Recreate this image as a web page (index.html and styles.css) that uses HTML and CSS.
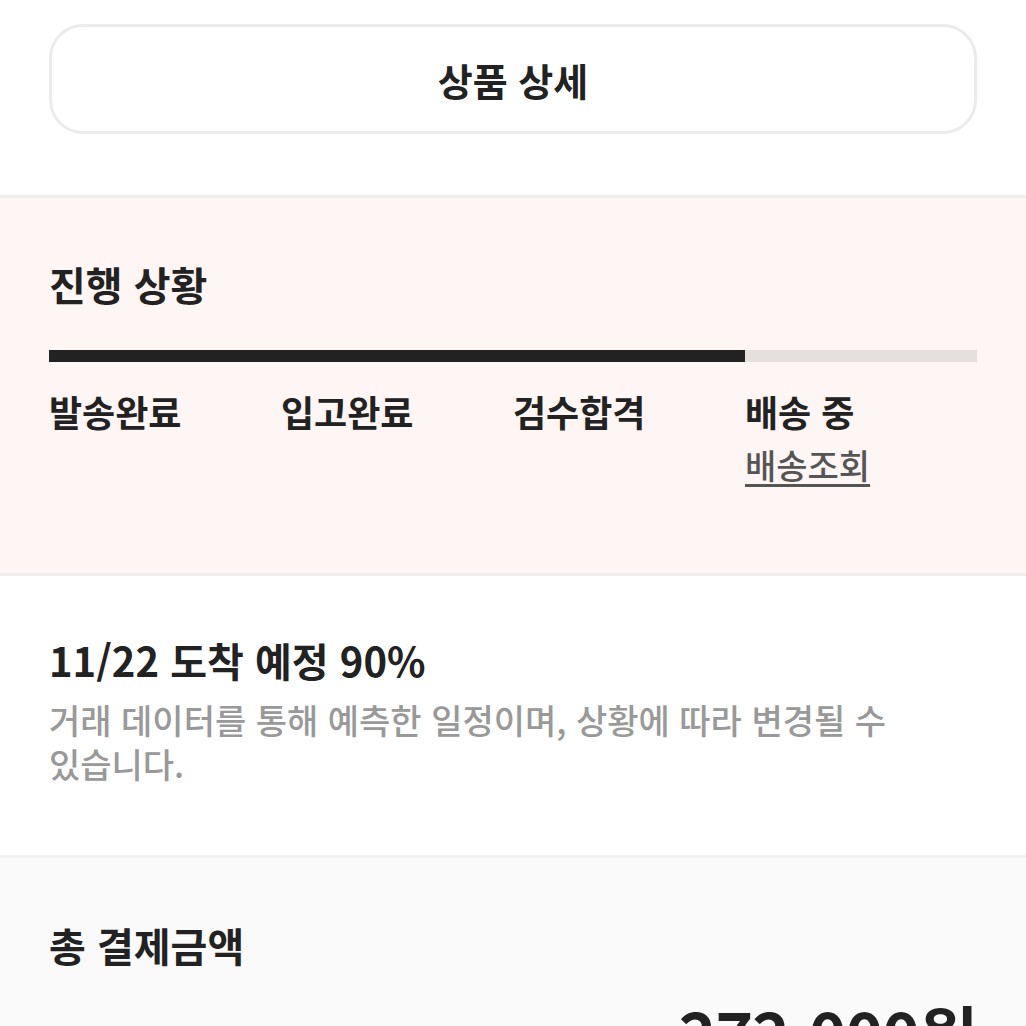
FILE: index.html
```html
<!DOCTYPE html>
<html lang="ko">
<head>
  <meta charset="utf-8">
  <link rel="stylesheet" href="styles.css">
</head>
<body>
  <section class="top">
    <button class="detail-btn">상품 상세</button>
  </section>

  <section class="status">
    <h2 class="title">진행 상황</h2>
    <div class="track"><div class="fill" style="width: 75%"></div></div>
    <ol class="steps">
      <li>발송완료</li>
      <li>입고완료</li>
      <li>검수합격</li>
      <li>배송 중<a href="#" class="track-link">배송조회</a></li>
    </ol>
  </section>

  <section class="eta">
    <h2 class="title">11/22 도착 예정 90%</h2>
    <p class="note">거래 데이터를 통해 예측한 일정이며, 상황에 따라 변경될 수 있습니다.</p>
  </section>

  <section class="total">
    <h2 class="title">총 결제금액</h2>
    <div class="amount">272,000원</div>
  </section>
</body>
</html>
```

FILE: styles.css
```css
body {
  font-family: "Noto Sans CJK KR", "Noto Sans", sans-serif;
  margin: 0;
  background: #fff;
  color: #222;
}

section {
  padding: 0 49px;
}

.top {
  padding-top: 24px;
  padding-bottom: 61px;
  border-bottom: 3px solid #f1eded;
}

.detail-btn {
  display: block;
  width: 100%;
  height: 110px;
  background: #fff;
  border: 3px solid #ebebeb;
  border-radius: 34px;
  font-family: inherit;
  font-size: 38px;
  font-weight: 700;
  color: #222;
}

.title {
  margin: 0;
  font-size: 40px;
  font-weight: 700;
  line-height: 46px;
}

.status {
  background: #fef6f4;
  padding-top: 63px;
  padding-bottom: 86px;
  border-bottom: 3px solid #f1eded;
}

.track {
  margin-top: 43px;
  height: 12px;
  background: #e5e0dd;
}

.fill {
  height: 100%;
  background: #222;
}

.steps {
  display: grid;
  grid-template-columns: repeat(4, 1fr);
  margin: 27px 0 0;
  padding: 0;
  list-style: none;
}

.steps li {
  font-size: 36px;
  font-weight: 700;
  line-height: 44px;
}

.track-link {
  display: block;
  margin-top: 10px;
  width: fit-content;
  font-size: 34px;
  font-weight: 500;
  color: #555;
  text-decoration: underline;
  text-decoration-thickness: 3px;
  text-underline-offset: 5px;
}

.eta {
  padding-top: 61px;
  padding-bottom: 69px;
  border-bottom: 3px solid #f1f1f1;
}

.note {
  margin: 15px 0 0;
  font-size: 34px;
  font-weight: 500;
  line-height: 44px;
  color: #999;
  word-break: keep-all;
}

.total {
  background: #fafafa;
  padding-top: 64px;
  padding-bottom: 40px;
}

.amount {
  margin-top: 26px;
  text-align: right;
  font-size: 64px;
  font-weight: 700;
  line-height: 76px;
  letter-spacing: -1px;
}
```
